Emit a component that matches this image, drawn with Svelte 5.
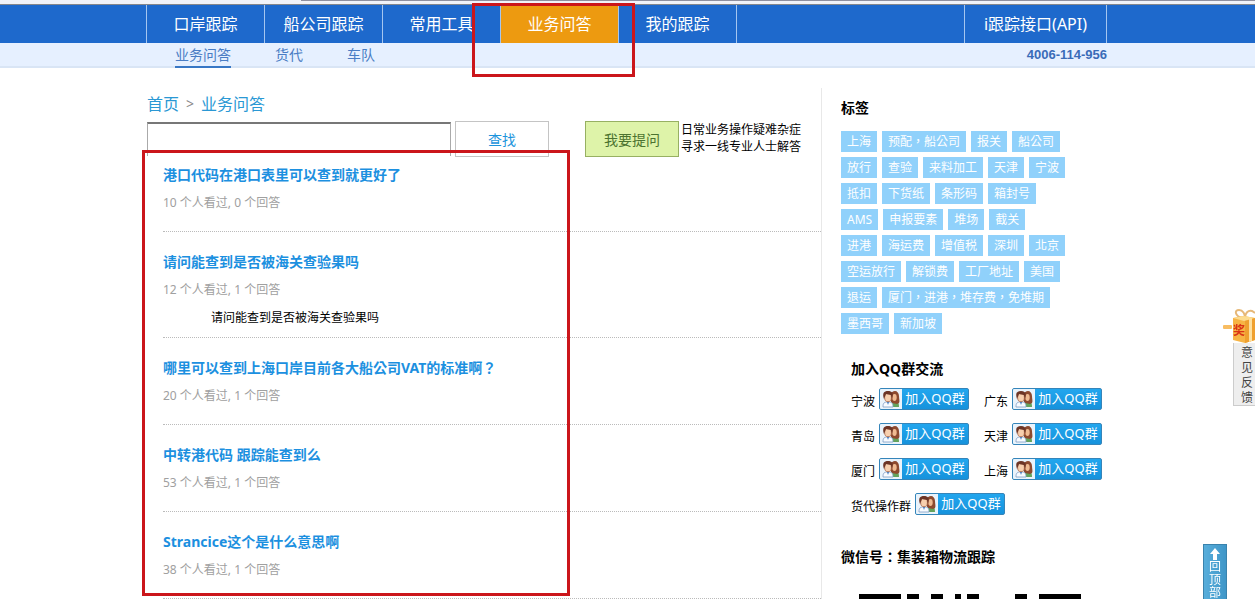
<script lang="ts">
  interface Question {
    title: string
    views: number
    answers: number
    excerpt?: string
  }

  const nav = ['口岸跟踪', '船公司跟踪', '常用工具', '业务问答', '我的跟踪']
  const subnav = ['业务问答', '货代', '车队']
  const current = '业务问答'

  const questions: Question[] = [
    { title: '港口代码在港口表里可以查到就更好了', views: 10, answers: 0 },
    { title: '请问能查到是否被海关查验果吗', views: 12, answers: 1, excerpt: '请问能查到是否被海关查验果吗' },
    { title: '哪里可以查到上海口岸目前各大船公司VAT的标准啊？', views: 20, answers: 1 },
    { title: '中转港代码 跟踪能查到么', views: 53, answers: 1 },
    { title: 'Strancice这个是什么意思啊', views: 38, answers: 1 },
  ]

  const tags = [
    '上海', '预配，船公司', '报关', '船公司', '放行', '查验', '来料加工', '天津', '宁波',
    '抵扣', '下货纸', '条形码', '箱封号', 'AMS', '申报要素', '堆场', '截关', '进港',
    '海运费', '增值税', '深圳', '北京', '空运放行', '解锁费', '工厂地址', '美国', '退运',
    '厦门，进港，堆存费，免堆期', '墨西哥', '新加坡',
  ]

  const groups = ['宁波', '广东', '青岛', '天津', '厦门', '上海', '货代操作群']

  // dark runs of the code's first row: [start, length] in modules
  const qrRow = [[0, 7], [8, 2], [12, 2], [16, 1], [18, 2], [26, 2], [30, 7]]

  let keyword = $state('')
</script>

<div class="strip"></div>

<header>
  <div class="bar">
    <nav class="wrap main-nav">
      {#each nav as item}
        <a href="#top" class:active={item === current}>{item}</a>
      {/each}
      <a href="#api" class="api">i跟踪接口(API)</a>
      <span class="frame frame-nav"></span>
    </nav>
  </div>
  <div class="sub">
    <div class="wrap sub-nav">
      {#each subnav as item}
        <a href="#top" class:active={item === current}>{item}</a>
      {/each}
      <strong>4006-114-956</strong>
    </div>
  </div>
</header>

<div class="wrap page">
  <main>
    <div class="crumbs"><a href="#top">首页</a><span>&gt;</span><a href="#top">业务问答</a></div>
    <form class="search" onsubmit={(e) => e.preventDefault()}>
      <input type="text" aria-label="关键字" bind:value={keyword} />
      <button type="submit" class="find">查找</button>
      <button type="button" class="ask">我要提问</button>
      <p>日常业务操作疑难杂症<br />寻求一线专业人士解答</p>
    </form>

    <div class="list">
      <span class="frame frame-list"></span>
      {#each questions as q}
        <article>
          <h2><a href="#top">{q.title}</a></h2>
          <p class="meta">{q.views} 个人看过, {q.answers} 个回答</p>
          {#if q.excerpt}
            <p class="excerpt">{q.excerpt}</p>
          {/if}
        </article>
      {/each}
    </div>
  </main>

  <aside>
    <h3>标签</h3>
    <div class="tags">
      {#each tags as tag}
        <a href="#top">{tag}</a>
      {/each}
    </div>

    <section class="qq">
      <h3>加入QQ群交流</h3>
      <div class="groups">
        {#each groups as group}
          <div class="group" class:wide={group.length > 2}>
            <span>{group}</span>
            <a href="#top" class="join">
              <svg viewBox="0 0 22 20" width="22" height="20" aria-hidden="true">
                <rect width="22" height="20" fill="#eaf3fb" />
                <path d="M11 18c0-4 1-6 4-6s4 2 4 6z" fill="#63a35c" />
                <path d="M11 13V6c0-3 2-4 4-4s4 2 4 5c0 3 1 5 0 7l-2 1-5-1z" fill="#8d4a2f" />
                <ellipse cx="14.5" cy="8.5" rx="2.2" ry="3.4" fill="#f0bb92" />
                <path d="M3 18c0-4 1-5 5-5s5 1 5 5z" fill="#f8fbff" stroke="#7c9cc4" stroke-width=".8" />
                <path d="M7 13l1 3 1-3z" fill="#3d78c2" />
                <ellipse cx="8" cy="8.5" rx="3.4" ry="4.2" fill="#f7cfae" stroke="#a86545" stroke-width=".8" />
                <path d="M4 10C2 4 4 2 8 2s6 2 4 8l-1-4c-2 0-4-1-5-1z" fill="#6d3526" />
              </svg>
              <b>加入QQ群</b>
            </a>
          </div>
        {/each}
      </div>
    </section>

    <h3 class="wechat">微信号：集装箱物流跟踪</h3>
    <svg class="qr" viewBox="0 0 222 5" width="222" height="5" aria-hidden="true">
      {#each qrRow as [start, length]}
        <rect x={start * 6} width={length * 6} height="5" />
      {/each}
    </svg>
  </aside>
</div>

<a href="#feedback" class="feedback">
  <svg viewBox="0 0 32 34" width="32" height="34" aria-hidden="true">
    <rect x="0" y="16" width="9" height="4" rx="1" fill="#f8bd62" />
    <path d="M19 9c-7-2-8-8-3-8 4 0 6 4 6 8M22 9c0-5 3-8 7-7l3 2" fill="none" stroke="#e6b878" stroke-width="2" />
    <path d="M10 9l11-2 11 2v22l-10 3-12-3z" fill="#f7b444" />
    <path d="M10 9l11-2 11 2-11 3z" fill="#fcdc90" />
    <path d="M22 12l10-3v22l-10 3z" fill="#efa02f" />
    <path d="M26 10l3-1v23l-3 1z" fill="#fde0a0" />
    <text x="10" y="26" font-size="12" font-weight="700" fill="#d93416">奖</text>
  </svg>
  <span>意见反馈</span>
</a>

<a href="#top" class="to-top">
  <svg viewBox="0 0 12 12" width="12" height="12" aria-hidden="true">
    <path d="M6 0l5 6H8v6H4V6H1z" fill="#fff" />
  </svg>
  <span>回顶部</span>
</a>

<style>
  :global(body) {
    background: #fff;
    color: #000;
    font: 12px/20px 'Noto Sans', 'Noto Sans CJK SC', sans-serif;
  }
  a {
    color: inherit;
    text-decoration: none;
  }
  h2,
  h3,
  p {
    margin: 0;
  }
  h3 {
    font-size: 14px;
    line-height: 20px;
  }
  /* the TC face centres full-width punctuation */
  h2,
  .tags,
  .wechat {
    font-family: 'Noto Sans', 'Noto Sans CJK TC', sans-serif;
  }
  .wrap {
    position: relative;
    box-sizing: border-box;
    max-width: 963px;
    margin: 0 auto;
  }
  .frame {
    position: absolute;
    box-sizing: border-box;
    border: 3px solid #cb161b;
    pointer-events: none;
    z-index: 2;
  }

  .strip {
    height: 4px;
    background: linear-gradient(90deg, transparent 24%, #8f90a0 24%) 0 0 / 100% 1px no-repeat #f1f3f9;
    border-bottom: 1px solid #85878c;
  }
  .bar {
    background: #1e69cc;
    color: #fff;
  }
  .main-nav {
    display: flex;
    padding-right: 2px;
  }
  .main-nav a {
    box-sizing: border-box;
    width: 118px;
    height: 38px;
    border-left: 1px solid #a5c6f0;
    font-size: 16px;
    line-height: 38px;
    text-align: center;
  }
  .main-nav a.active {
    background: #ed9a10;
  }
  .main-nav a:nth-child(5) {
    width: 119px;
    border-right: 1px solid #a5c6f0;
  }
  .main-nav .api {
    width: 143px;
    margin-left: auto;
    border-right: 1px solid #a5c6f0;
  }
  .frame-nav {
    left: 326px;
    top: -2px;
    width: 163px;
    height: 74px;
  }
  .sub {
    height: 23px;
    background: #e6f0ff;
    border-bottom: 2px solid #d9e5f5;
    color: #4a7dc4;
  }
  .sub-nav {
    display: flex;
    gap: 44px;
    padding: 0 2px 0 29px;
    font-size: 14px;
    line-height: 23px;
  }
  .sub-nav a.active {
    border-bottom: 2px solid #3877c5;
  }
  .sub-nav strong {
    margin-left: auto;
    color: #3a6cb8;
    font: bold 13px/24px 'Liberation Sans', sans-serif;
  }

  .page {
    display: flex;
    padding: 20px 2px 0 1px;
  }
  main {
    flex: 1;
    max-width: 674px;
  }
  .crumbs {
    display: flex;
    gap: 7px;
    height: 33px;
    color: #2a98d4;
    font-size: 16px;
    line-height: 32px;
  }
  .crumbs span {
    color: #888;
    font-size: 14px;
  }
  .search {
    display: flex;
    align-items: flex-start;
    height: 36px;
  }
  .search input {
    box-sizing: border-box;
    width: 304px;
    height: 34px;
    margin: 1px 4px 0 0;
    padding: 0 6px;
    border: 1px solid #aaa;
    border-top: 2px solid #777;
    border-bottom: 0;
    outline: 0;
  }
  .search button {
    box-sizing: border-box;
    width: 94px;
    height: 36px;
    padding: 2px 0 0;
    border: 1px solid #c4c4c4;
    background: #fff;
    color: #1c94dc;
    font: inherit;
    font-size: 14px;
  }
  .search .ask {
    margin: 0 2px 0 36px;
    border-color: #97b062;
    background: #def3a9;
    color: #4c7330;
  }
  .search p {
    line-height: 17px;
  }

  .list {
    position: relative;
    padding-left: 16px;
  }
  .frame-list {
    left: -5px;
    top: -7px;
    bottom: 3px;
    width: 428px;
  }
  article {
    padding: 20px 0 10px;
    border-bottom: 1px dotted #bbb;
  }
  .frame-list + article {
    padding-top: 8px;
  }
  h2 {
    color: #1c90e0;
    font-size: 14px;
    line-height: 20px;
  }
  .meta {
    margin: 8px 0;
    color: #a0a0a0;
  }
  .excerpt {
    padding-left: 48px;
    line-height: 20px;
  }
  .meta:last-child {
    margin-bottom: 9px;
  }
  article {
    padding-bottom: 9px;
  }

  aside {
    flex: none;
    width: 266px;
    padding: 10px 0 0 19px;
    border-left: 1px solid #e8e8e8;
  }
  .tags {
    display: flex;
    flex-wrap: wrap;
    gap: 5px;
    width: 225px;
    margin-top: 13px;
  }
  .tags a {
    padding: 0 6px;
    background: #90d1fb;
    color: #fff;
    line-height: 21px;
  }
  .qq {
    margin: 25px 0 0 10px;
  }
  .groups {
    display: grid;
    grid-template-columns: 133px 1fr;
    gap: 13px 0;
    margin-top: 9px;
  }
  .group {
    display: flex;
    align-items: flex-end;
    gap: 4px;
    line-height: 16px;
  }
  .group.wide {
    grid-column: span 2;
  }
  .join {
    display: flex;
    box-sizing: border-box;
    width: 90px;
    height: 22px;
    border: 1px solid #3585ba;
    border-radius: 2px;
    background: linear-gradient(#22a6ee, #1692dc);
    color: #fff;
    overflow: hidden;
  }
  .join b {
    flex: 1;
    font-size: 13px;
    font-weight: 400;
    line-height: 19px;
    text-align: center;
  }
  .wechat {
    margin-top: 32px;
  }
  .qr {
    display: block;
    margin: 27px 0 0 18px;
  }

  .feedback {
    position: fixed;
    top: 309px;
    right: 0;
    display: flex;
    flex-direction: column;
    align-items: flex-end;
    width: 32px;
  }
  .feedback span {
    box-sizing: border-box;
    width: 22px;
    height: 63px;
    padding: 2px 3px 0 7px;
    border: 1px solid #ccc;
    border-width: 0 0 1px 1px;
    background: #eee;
    color: #444;
    line-height: 15px;
    word-break: break-all;
  }
  .to-top {
    position: fixed;
    right: 28px;
    bottom: 0;
    display: flex;
    flex-direction: column;
    align-items: center;
    box-sizing: border-box;
    width: 24px;
    height: 55px;
    padding-top: 3px;
    border: 1px solid #3a83ad;
    border-bottom: 0;
    background: linear-gradient(90deg, #58aedb, #3f96c8);
    color: #fff;
  }
  .to-top svg {
    flex: none;
  }
  .to-top span {
    width: 12px;
    line-height: 13px;
    word-break: break-all;
  }
</style>
